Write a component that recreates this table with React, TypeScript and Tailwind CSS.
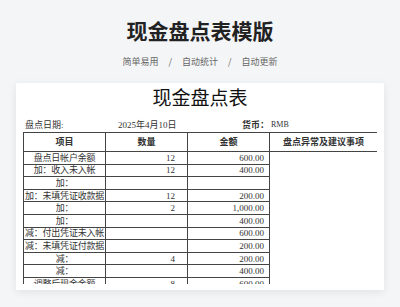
import React from "react";

const rows: [string, string, string][] = [
  ["盘点日帐户余额", "12", "600.00"],
  ["加：收入未入帐", "12", "400.00"],
  ["加：", "", ""],
  ["加：未填凭证收款据", "12", "200.00"],
  ["加：", "2", "1,000.00"],
  ["加：", "", "400.00"],
  ["减：付出凭证未入帐", "", "600.00"],
  ["减：未填凭证付款据", "", "200.00"],
  ["减：", "4", "200.00"],
  ["减：", "", "400.00"],
  ["调整后现金余额", "8", "600.00"],
];

const serif = { fontFamily: '"Liberation Serif", "Noto Sans CJK SC", serif' };

export default function App() {
  return (
    <div className="w-[400px] h-[307px] bg-[#f4f5f7] overflow-hidden flex flex-col items-center" style={{ fontFamily: '"Noto Sans CJK SC", "Noto Sans", sans-serif' }}>
      <h1 className="mt-[15px] text-[21px] leading-[30px] font-bold text-[#222]">现金盘点表模版</h1>
      <div className="mt-[11px] flex items-center text-[9px] leading-[12px] text-[#666]">
        <span>简单易用</span>
        <span className="mx-[10px]">/</span>
        <span>自动统计</span>
        <span className="mx-[10px]">/</span>
        <span>自动更新</span>
      </div>
      <div className="mt-[15px] w-[368px] h-[207px] bg-white shadow-[0_2px_8px_rgba(0,0,0,0.08)] flex flex-col px-[7px] pb-[6px]" style={serif}>
        <div className="mt-[4px] text-center text-[19px] leading-[24px] text-[#111]">现金盘点表</div>
        <div className="mt-[8px] flex items-center text-[9px] leading-[12px] text-[#333] h-[12px]">
          <span className="ml-[2px] w-[93px]">盘点日期:</span>
          <span className="w-[124px]">2025年4月10日</span>
          <span className="font-bold">货币：</span>
          <span className="ml-[2px] text-[8px]">RMB</span>
        </div>
        <div className="mt-[1px] h-[152px] overflow-hidden">
          <table className="border-collapse w-[354px] table-fixed text-[9px] text-[#333]">
            <colgroup>
              <col className="w-[82px]" />
              <col className="w-[82px]" />
              <col className="w-[82px]" />
              <col className="w-[108px]" />
            </colgroup>
            <thead>
              <tr className="h-[19px]">
                <th className="border border-[#444] font-bold p-0 leading-[10px]">项目</th>
                <th className="border border-[#444] font-bold p-0 leading-[10px]">数量</th>
                <th className="border border-[#444] font-bold p-0 leading-[10px]">金额</th>
                <th className="border border-[#444] font-bold p-0 leading-[10px]">盘点异常及建议事项</th>
              </tr>
            </thead>
            <tbody>
              {rows.map((r, i) => (
                <tr key={i} className="h-[12.6px]">
                  <td className="border border-[#444] p-0 leading-[10px] text-center whitespace-nowrap overflow-hidden tracking-[-0.2px]">{r[0]}</td>
                  <td className="border border-[#444] p-0 pr-[12px] leading-[10px] text-right">{r[1]}</td>
                  <td className="border border-[#444] p-0 pr-[5px] leading-[10px] text-right">{r[2]}</td>
                  {i === 0 && <td rowSpan={12} className="border border-[#444] p-0"></td>}
                </tr>
              ))}
              <tr className="h-[12.6px]">
                <td className="border border-[#444] p-0"></td>
                <td className="border border-[#444] p-0"></td>
                <td className="border border-[#444] p-0"></td>
              </tr>
            </tbody>
          </table>
        </div>
      </div>
    </div>
  );
}
